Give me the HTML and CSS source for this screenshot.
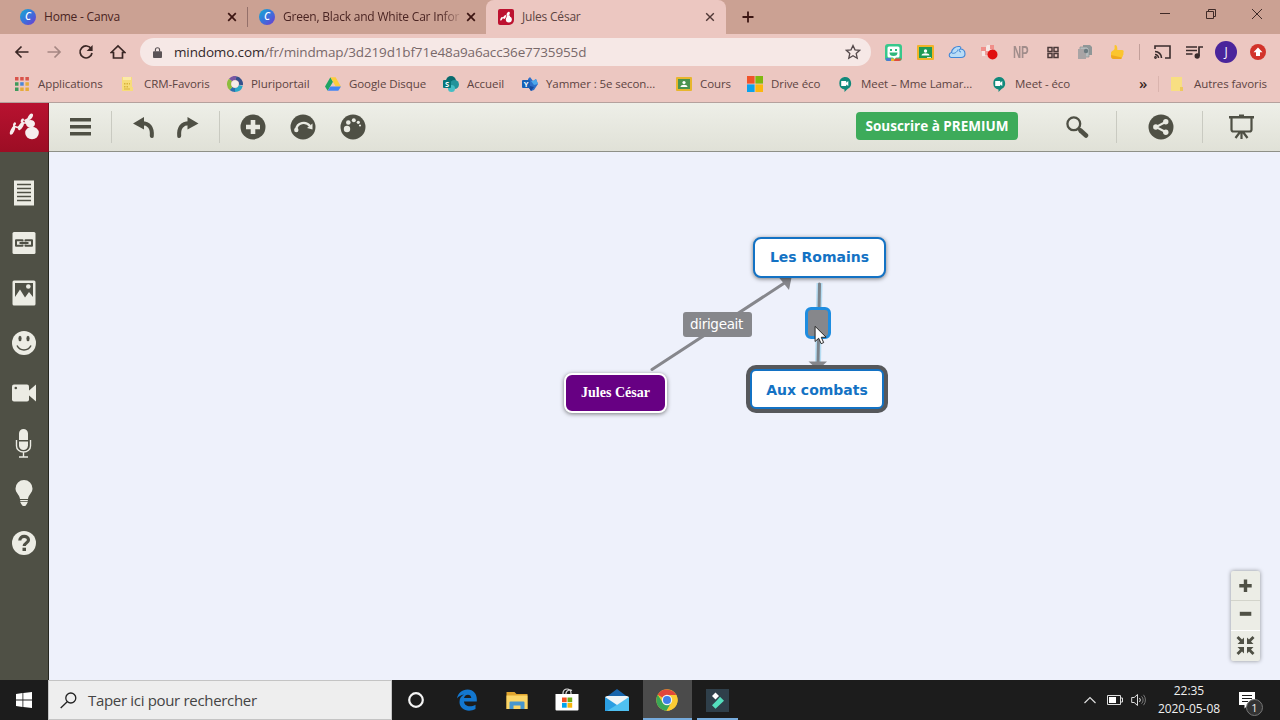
FILE: index.html
```html
<!DOCTYPE html>
<html lang="fr">
<head>
    <meta charset="UTF-8">
    <meta name="viewport" content="width=device-width, initial-scale=1.0">
    <title>Jules César</title>
    <link rel="stylesheet" href="styles.css">
</head>
<body>
    <!-- browser tabs -->
    <div class="tabs">
        <div class="tab">
            <span class="canva">C</span>
            <span class="tab-title">Home - Canva</span>
            <svg class="close" viewBox="0 0 10 10"><path d="M1.2 1.2l7.6 7.6M8.8 1.2L1.2 8.8"/></svg>
        </div>
        <div class="tab tab-second">
            <span class="canva">C</span>
            <span class="tab-title fade">Green, Black and White Car Infor</span>
            <svg class="close" viewBox="0 0 10 10"><path d="M1.2 1.2l7.6 7.6M8.8 1.2L1.2 8.8"/></svg>
        </div>
        <div class="tab active">
            <svg class="favicon" viewBox="0 0 16 16"><path fill="#bd1230" d="M2 0h12a2 2 0 0 1 2 2v9a5 5 0 0 1-5 5H2a2 2 0 0 1-2-2V2a2 2 0 0 1 2-2z"/><g fill="#fff"><circle cx="10.800" cy="10.500" r="3"/><ellipse cx="10.200" cy="4.800" rx="1.400" ry="2.200" transform="rotate(25 10.200 4.800)"/><path d="M8.500 6.500h3.500v3h-3z"/><ellipse cx="6.700" cy="8" rx="1" ry="2.200" transform="rotate(25 6.700 8)"/><ellipse cx="3.400" cy="9.800" rx=".9" ry="2" transform="rotate(25 3.400 9.800)"/><path d="M3.500 8.800l4-1.800v1.200l-3.700 1.600z"/></g></svg>
            <span class="tab-title">Jules César</span>
            <svg class="close" viewBox="0 0 10 10"><path d="M1.2 1.2l7.6 7.6M8.8 1.2L1.2 8.8"/></svg>
        </div>
        <svg class="new-tab" viewBox="0 0 12 12"><path d="M6 .5v11M.5 6h11"/></svg>
        <div class="window-buttons">
            <svg viewBox="0 0 12 12"><path d="M1 5.500h10"/></svg>
            <svg viewBox="0 0 12 12"><path d="M1.5 3.5h7v7h-7zM3.5 3.5v-2h7v7h-2"/></svg>
            <svg viewBox="0 0 12 12"><path d="M1 1l10 10M11 1L1 11"/></svg>
        </div>
    </div>

    <!-- address bar -->
    <div class="navbar">
        <div class="cell"><svg class="nav-icon" viewBox="0 0 16 16"><path d="M14.500 8H2M7.500 2.500L2 8l5.500 5.500"/></svg></div>
        <div class="cell"><svg class="nav-icon disabled" viewBox="0 0 16 16"><path d="M1.500 8H14M8.500 2.500L14 8l-5.500 5.500"/></svg></div>
        <div class="cell"><svg class="nav-icon" viewBox="0 0 16 16"><path d="M13.3 5A6 6 0 1 0 14 9"/><path class="solid" d="M14.6 1v6H8.6z"/></svg></div>
        <div class="cell"><svg class="nav-icon" viewBox="0 0 16 16"><path d="M1.2 8.5L8 2l6.800 6.500H12.500V14h-9V8.500z"/></svg></div>
        <div class="omnibox">
            <svg class="lock" viewBox="0 0 10 12"><path d="M1 4.500h8a1 1 0 0 1 1 1V11a1 1 0 0 1-1 1H1a1 1 0 0 1-1-1V5.500a1 1 0 0 1 1-1z" fill="#5b5356"/><path d="M2.700 5V3a2.300 2.300 0 0 1 4.600 0v2" fill="none" stroke="#5b5356" stroke-width="1.300"/></svg>
            <span class="url"><b>mindomo.com</b>/fr/mindmap/3d219d1bf71e48a9a6acc36e7735955d</span>
            <svg class="star" viewBox="0 0 16 16"><path d="M8 1.500l2 4.300 4.700.5-3.500 3.200 1 4.700L8 11.800l-4.200 2.400 1-4.700L1.300 6.300 6 5.800z"/></svg>
        </div>
        <div class="extensions">
            <div class="cell"><svg width="17" height="17" viewBox="0 0 17 17"><rect width="17" height="17" rx="3" fill="#37c88c"/><path d="M1 14h5v3H3a2 2 0 0 1-2-3z" fill="#4b7bd0"/><path d="M6 14.500h5l-2 2.500H6z" fill="#efb42c"/><path d="M10 14.500h6.500a3 3 0 0 1-2.500 2.500H9z" fill="#e24a3b"/><path d="M4 2.500h9a1.500 1.500 0 0 1 1.500 1.500v8a1.500 1.500 0 0 1-1.500 1.500h-2l-1.500 1.500-1.500-1.500H4A1.500 1.500 0 0 1 2.500 12V4A1.500 1.500 0 0 1 4 2.500z" fill="#fff"/><path d="M5 5h2v2H5zM10 5h2v2h-2zM4.500 8.500h8a4 3.500 0 0 1-8 0z" fill="#2fb67c"/></svg></div>
            <div class="cell"><svg width="17" height="15" viewBox="0 0 17 15"><rect width="17" height="15" rx="1" fill="#f0b429"/><rect x="2" y="2" width="13" height="11" fill="#1f9a55"/><circle cx="8.500" cy="6" r="1.700" fill="#fff"/><path d="M4.500 10.500c0-3 8-3 8 0z" fill="#fff"/><path d="M10 12h4v1h-4z" fill="#d8e8dc"/></svg></div>
            <div class="cell"><svg width="18" height="14" viewBox="0 0 18 14"><path d="M3 12.500C.5 12 .5 8 3.500 7.500 4 4 7 1 11.500 1.500c2 .5 1.500 2 .5 2.500 3 0 5 2 5 5s-2 3.500-4 3.500z" fill="#b9dcf6" stroke="#3f86d6" stroke-width="1.100"/><path d="M4 8c2 1 5-.5 6-3.500M12 4c-1.500 1-1 3 1 3" fill="none" stroke="#3f86d6"/></svg></div>
            <div class="cell"><svg width="18" height="16" viewBox="0 0 18 16"><path d="M2 3h4l1-2h5v7H7l-2 4H2z" fill="#f6e7e4"/><path d="M1 3h5v4H1zM10 1h4v4h-4z" fill="#f08f8a"/><path d="M5 7h4v4H5z" fill="#ee9d98"/><circle cx="12.500" cy="10.500" r="5" fill="#e0100f"/></svg></div>
            <div class="cell"><span class="np">NP</span></div>
            <div class="cell"><svg width="12" height="13" viewBox="0 0 12 13" fill="none" stroke="#4b3a3a" stroke-width="1.500"><path d="M1 1.500h4v4H1zM7 1.500h4v4H7zM1 7.500h4v4H1zM7 7.500h4v4H7z"/></svg></div>
            <div class="cell"><svg width="16" height="16" viewBox="0 0 16 16"><path d="M6 1h7l2 2v8H6z" fill="#8f9798"/><path d="M3 3h7l2 2v8H3z" fill="#b5bcbd" stroke="#8b8f91" stroke-width=".7"/><path d="M1 5h6l2 2v8H1z" fill="#a8a4a5"/><circle cx="9" cy="7" r="2.200" fill="#6c7b80"/></svg></div>
            <div class="cell"><svg width="14" height="16" viewBox="0 0 14 16"><path d="M5 1c2 0 2.500 2 2.300 5H12c2 0 2 2 1.300 3 .5 1 0 2-.5 2.500 0 1-.3 1.500-1 2 0 1-.8 1.500-1.800 1.500H4c-2 0-3-1-3-3V9c0-2 3-2.500 3.500-4C5 3 4 1.500 5 1z" fill="#fbc52e"/><path d="M1 11c0 3 1 4 3 4h6c1 0 1.800-.5 1.800-1.500z" fill="#f0a71f"/></svg></div>
        </div>
        <span class="bar-sep"></span>
        <div class="cell"><svg width="17" height="14" viewBox="0 0 17 14" fill="none" stroke="#3a2c2c" stroke-width="1.600"><path d="M1 4V1h15v12h-5M1 6.500A6.500 6.500 0 0 1 7.500 13M1 9.500A3.500 3.500 0 0 1 4.500 13"/><circle cx="1.500" cy="12.500" r=".6"/></svg></div>
        <div class="cell"><svg width="17" height="14" viewBox="0 0 17 14" fill="none" stroke="#3a2c2c" stroke-width="1.700"><path d="M0 2h11M0 5.500h11M0 9h6.500M13 11V2h4"/><circle cx="11.200" cy="11" r="1.800" fill="#3a2c2c"/></svg></div>
        <div class="cell"><span class="avatar">J</span></div>
        <div class="cell"><svg width="16" height="16" viewBox="0 0 16 16"><circle cx="8" cy="8" r="8" fill="#d2332a"/><path d="M8 3.500l4.500 4.700H10V12H6V8.200H3.500z" fill="#fff"/></svg></div>
    </div>

    <!-- bookmarks -->
    <div class="bookmarks">
        <div class="bookmark"><svg viewBox="0 0 16 16"><path fill="#d9534a" d="M1 1h3.500v3.500H1zM6.200 1h3.500v3.500H6.200zM11.400 1h3.500v3.500h-3.500z"/><path fill="#3f9a5c" d="M1 6.200h3.500v3.500H1zM1 11.400h3.500v3.500H1z"/><path fill="#4b87d9" d="M6.200 6.200h3.500v3.500H6.200z"/><path fill="#e6ab3a" d="M11.400 6.200h3.500v3.500h-3.500zM6.200 11.400h3.500v3.500H6.200zM11.400 11.400h3.500v3.500H11.400z"/></svg><span>Applications</span></div>
        <div class="bookmark"><svg viewBox="0 0 16 16"><path fill="#f7dc7a" d="M2 1h10v10h1v4H2z"/><path fill="#fbeaa6" d="M3 1h8v3H3z"/><path fill="#d9b23c" d="M4 7h1.500v1.500H4zM6.500 7H8v1.500H6.500zM9 7h1v1.500H9zM4 10h1.500v1.500H4zM6.500 10H8v1.500H6.500zM4 12.500h6v1H4z"/></svg><span>CRM-Favoris</span></div>
        <div class="bookmark"><svg viewBox="0 0 16 16" fill="none" stroke-width="4"><path stroke="#7a57a3" d="M3.500 4A6 6 0 0 1 9 2"/><path stroke="#35508c" d="M9 2.100A6 6 0 0 1 13.900 9"/><path stroke="#29a9c7" d="M13.800 9.500A6 6 0 0 1 8 14"/><path stroke="#2c6fad" d="M8 14a6 6 0 0 1-4-1.500"/><path stroke="#8dbd3d" d="M4 12.500A6 6 0 0 1 3.500 4"/><circle cx="8" cy="8" r="3.500" fill="#f4ece9" stroke="none"/></svg><span>Pluriportail</span></div>
        <div class="bookmark"><svg viewBox="0 0 16 16"><path fill="#1fa463" d="M5.400 1.200L0 10.600l2.700 4.200L8 5.700z"/><path fill="#fccd3c" d="M5.400 1.200h5.200l5.400 9.400h-5.300z"/><path fill="#4285f4" d="M2.700 14.800l2.700-4.200H16l-2.700 4.200z"/></svg><span>Google Disque</span></div>
        <div class="bookmark"><svg viewBox="0 0 16 16"><circle cx="8" cy="5" r="5" fill="#086a6d"/><circle cx="11.500" cy="8.500" r="4.500" fill="#22939a"/><circle cx="8.500" cy="12.500" r="3.500" fill="#44bec5"/><rect y="4" width="8" height="8" rx="1" fill="#067578"/><text x="2" y="10.700" font-size="7.500" font-weight="bold" fill="#fff">S</text></svg><span>Accueil</span></div>
        <div class="bookmark"><svg viewBox="0 0 16 16"><path fill="#2d6fc9" d="M6 3l2-2 3 4 3-2 2 5-4 6-3 1-3-5z"/><path fill="#4da7ea" d="M9 5l2 0 3-2 2 5-4 1z"/><path fill="#174a9e" d="M8 10l4 1-3 4-2-3z"/><rect y="4" width="8" height="8" rx="1" fill="#155fb5"/><text x="1.700" y="10.700" font-size="7.500" font-weight="bold" fill="#fff">Y</text></svg><span>Yammer : 5e secon...</span></div>
        <div class="bookmark"><svg viewBox="0 0 16 16"><rect y="1" width="16" height="14" rx="1" fill="#e7b62d"/><rect x="2" y="3" width="12" height="10" fill="#4a934e"/><circle cx="8" cy="6.500" r="1.600" fill="#fff"/><path d="M4.500 11c0-3 7-3 7 0z" fill="#fff"/></svg><span>Cours</span></div>
        <div class="bookmark"><svg viewBox="0 0 16 16"><path fill="#f0532a" d="M0 0h7.600v7.600H0z"/><path fill="#7fb80f" d="M8.400 0H16v7.600H8.400z"/><path fill="#0ba2ec" d="M0 8.400h7.600V16H0z"/><path fill="#fbb70e" d="M8.400 8.400H16V16H8.400z"/></svg><span>Drive éco</span></div>
        <div class="bookmark"><svg viewBox="0 0 16 16"><path fill="#11897b" d="M7.500 1a6.300 6.300 0 0 1 3 12L7.500 16v-2.600A6.300 6.300 0 0 1 7.500 1z"/><path fill="#fff" d="M4.200 5h5v1.700L11.300 5v5L9.200 8.500V10h-5z"/></svg><span>Meet – Mme Lamar...</span></div>
        <div class="bookmark"><svg viewBox="0 0 16 16"><path fill="#11897b" d="M7.500 1a6.300 6.300 0 0 1 3 12L7.500 16v-2.600A6.300 6.300 0 0 1 7.500 1z"/><path fill="#fff" d="M4.200 5h5v1.700L11.300 5v5L9.200 8.500V10h-5z"/></svg><span>Meet - éco</span></div>
        <div class="more">»</div>
        <div class="bookmark others"><svg viewBox="0 0 16 16"><path fill="#f8df82" d="M1 1h11v10h1v4H1z"/><path fill="#eec95c" d="M10 11h3v4h-3z"/></svg><span>Autres favoris</span></div>
    </div>

    <!-- mindmap editor -->
    <div class="toolbar">
        <div class="logo">
            <svg width="32" height="28" viewBox="0 0 32 28" fill="#f6eeee"><ellipse cx="24" cy="20" rx="6.800" ry="6.200"/><ellipse cx="22.500" cy="10.800" rx="4.500" ry="3.800"/><ellipse cx="22.300" cy="3.800" rx="2" ry="3.600" transform="rotate(35 22.300 3.800)"/><path d="M20 5l-4 2 2 4 4-2z"/><ellipse cx="13" cy="13" rx="2" ry="4.600" transform="rotate(30 13 13)"/><ellipse cx="14.300" cy="7.500" rx="1.400" ry="2.200" transform="rotate(30 14.300 7.500)"/><ellipse cx="4.500" cy="17.500" rx="1.900" ry="4.600" transform="rotate(25 4.500 17.500)"/><ellipse cx="6.500" cy="11.200" rx="1.300" ry="2" transform="rotate(30 6.500 11.200)"/><path d="M5 13l5 1.500 3-3M14 10l5 0" fill="none" stroke="#f6eeee" stroke-width="1.600"/></svg>
        </div>
        <div class="tool menu"><svg width="21" height="20" viewBox="0 0 21 20"><path d="M0 1h21v3.500H0zM0 8h21v3.500H0zM0 15h21v3.500H0z"/></svg></div>
        <span class="sep"></span>
        <div class="history">
            <div class="tool"><svg width="24" height="24" viewBox="0 0 24 24"><path d="M1 7.500L12 1v12.500z"/><path class="line" d="M10 7.300c7 0 10.500 4 9.800 12.700"/></svg></div>
            <div class="tool"><svg width="24" height="24" viewBox="0 0 24 24"><path d="M23.500 7.500L12.500 1v12.500z"/><path class="line" d="M14 7.300C7 7.300 3.500 11.300 4.200 20"/></svg></div>
        </div>
        <span class="sep"></span>
        <div class="topics">
            <div class="tool"><svg width="26" height="26" viewBox="0 0 26 26"><circle cx="13" cy="13" r="12.500"/><path class="cut" d="M10.700 6h4.600v4.700H20v4.600h-4.700V20h-4.600v-4.700H6v-4.600h4.700z"/></svg></div>
            <div class="tool"><svg width="26" height="26" viewBox="0 0 26 26"><circle cx="13" cy="13" r="12.500"/><path d="M6 16c1-8 10-9 14-4" fill="none" stroke="#e9eae2" stroke-width="2.300"/><circle class="cut" cx="6.300" cy="16" r="2.200"/><path class="cut" d="M22.500 9.500v6l-5.500-1.500z"/></svg></div>
            <div class="tool"><svg width="26" height="26" viewBox="0 0 26 26"><circle cx="13" cy="13" r="12.500"/><circle class="cut" cx="7" cy="15" r="3.200"/><circle class="cut" cx="8.300" cy="8.500" r="2.300"/><circle class="cut" cx="13.800" cy="6.300" r="2"/><circle class="cut" cx="18.300" cy="8.300" r="1.600"/><circle class="cut" cx="20" cy="11.500" r="1.100"/></svg></div>
        </div>
        <button class="premium">Souscrire à PREMIUM</button>
        <div class="tool search"><svg width="24" height="24" viewBox="0 0 24 24"><circle cx="8.800" cy="8.800" r="6.400" fill="none" stroke="#4f5045" stroke-width="2.300"/><path d="M13 13l3 3" stroke="#4f5045" stroke-width="3"/><path d="M15.500 15.500l5.500 5" stroke="#4f5045" stroke-width="4.500" stroke-linecap="round"/></svg></div>
        <span class="sep"></span>
        <div class="tool share"><svg width="26" height="26" viewBox="0 0 26 26"><circle cx="13" cy="13" r="12.500"/><path d="M17.500 8L8 13l9.500 5" fill="none" stroke="#e9eae2" stroke-width="2"/><circle class="cut" cx="17.800" cy="7.700" r="2.700"/><circle class="cut" cx="7.800" cy="13" r="2.700"/><circle class="cut" cx="17.800" cy="18.300" r="2.700"/></svg></div>
        <span class="sep"></span>
        <div class="tool present"><svg width="26" height="26" viewBox="0 0 26 26"><path d="M0 2h10V.5h5V2h10v2.500H0z"/><path d="M2.500 4v11.500a2 2 0 0 0 2 2h16a2 2 0 0 0 2-2V4M12.500 18v7M11 18l-4.500 6M14 18l4.500 6" fill="none" stroke="#4f5045" stroke-width="2.200"/></svg></div>
    </div>

    <div class="editor">
        <div class="sidebar">
            <svg viewBox="0 0 26 26"><path d="M3.500.5h20v25h-20z"/><path class="dark" d="M6.500 4.500h14M6.500 8.500h14M6.500 12.500h14M6.500 16.500h14M6.500 20.500h14"/></svg>
            <svg viewBox="0 0 26 26"><rect x="2" y="2" width="23" height="22" rx="1.500"/><path class="chain" d="M12 11.500V10.200H5.500v5.600H12v-1.300M15 11.500v-1.300h6.500v5.600H15v-1.300M9 13h9"/></svg>
            <svg viewBox="0 0 26 26"><rect x="2" y=".5" width="23" height="25" rx="1.500"/><path fill="#4f5045" d="M4.500 3h18v14l-4-5-4 5.500-5-8L4.500 17z"/><circle cx="17.800" cy="6.500" r="2.300"/></svg>
            <svg viewBox="0 0 26 26"><circle cx="13.500" cy="13" r="12"/><ellipse cx="9.500" cy="8.500" rx="1.600" ry="2.800" fill="#4f5045"/><ellipse cx="17.500" cy="8.500" rx="1.600" ry="2.800" fill="#4f5045"/><path class="dark" d="M6.500 15.500c3 6 11 6 14 0"/></svg>
            <svg viewBox="0 0 26 26"><rect x="1.500" y="4.500" width="17" height="17" rx="2"/><path d="M18 11l7.500-6.500v17L18 15z"/><circle cx="5.300" cy="8" r="1.300" fill="#4f5045"/></svg>
            <svg class="tall" viewBox="0 0 26 30"><path d="M8.500 12V5.500a4.500 4.500 0 0 1 9 0V12z"/><path d="M8.500 13.500v4a4.500 4.500 0 0 0 9 0v-4z"/><path d="M6 12v6c0 3.500 3 6 7 6s7-2.500 7-6v-6M13 24v5M8.500 29h9" fill="none" stroke="#ecece4" stroke-width="1.400"/></svg>
            <svg viewBox="0 0 26 26"><path d="M13.500 0a8.500 8.500 0 0 1 8.500 8.500c0 4.500-4 6-4.500 10.500h-8C9 14.500 5 13 5 8.500A8.500 8.500 0 0 1 13.500 0z"/><path d="M9.700 20h7.600v1.200H9.700zM9.700 22h7.600l-1 2-1.500 2h-2.500l-1.600-2z"/></svg>
            <svg viewBox="0 0 26 26"><circle cx="13.500" cy="13" r="12"/><path d="M9.300 10.500c0-5.500 8.700-5.300 8.700-.5 0 3-4.300 3-4.300 6" fill="none" stroke="#4f5045" stroke-width="3.200"/><path fill="#4f5045" d="M12 17.700h3.500V21H12z"/></svg>
        </div>
        <div class="canvas">
            <svg class="links" width="1231" height="528" viewBox="49 152 1231 528">
                <path d="M652 369.500L786 282" stroke="#86878c" stroke-width="3" stroke-linecap="round"/>
                <path d="M779 277.500h12.500L789 290z" fill="#86878c"/>
                <path d="M819.500 283L818 364" stroke="#b5dcf2" stroke-width="6"/>
                <path d="M819.500 284L818 364" stroke="#7c838a" stroke-width="3" stroke-linecap="round"/>
                <path d="M808.500 361.500h18.500L818 370z" fill="#86878c"/>
            </svg>
            <div class="node romains">Les Romains</div>
            <div class="node combats">Aux combats</div>
            <div class="node cesar">Jules César</div>
            <div class="link-label">dirigeait</div>
            <div class="link-label editing"></div>
            <svg class="cursor" viewBox="0 0 12 18"><path d="M1 1v14l3.300-3 2.300 5 2.300-1-2.200-4.900h4.500z" fill="#fff" stroke="#222" stroke-width=".9"/></svg>
            <div class="zoom-box">
                <svg viewBox="0.500 0 29 29"><path d="M13.300 8.500h3.400V13h4.500v3.400h-4.500V21h-3.400v-4.600H8.800V13h4.500z"/></svg>
                <svg viewBox="0.500 0 29 29"><path d="M9.300 10.800h11.500v4H9.300z"/></svg>
                <svg viewBox="0.500 0 29 30"><g id="arrow"><path d="M13.500 13V6.500l-2 2L8 5 6 7l3.500 3.500L7 13z"/></g><use href="#arrow" transform="matrix(-1 0 0 1 30 0)"/><use href="#arrow" transform="matrix(1 0 0 -1 0 29)"/><use href="#arrow" transform="rotate(180 15 14.500)"/></svg>
            </div>
        </div>
    </div>

    <!-- Windows taskbar -->
    <div class="taskbar">
        <div class="start"><svg width="16" height="16" viewBox="0 0 16 16" fill="#fff"><path d="M0 2l6.500-.9v6.500H0zM7.300 1L16 0v7.600H7.300zM0 8.400h6.500v6.500L0 14zM7.300 8.400H16V16l-8.700-1z"/></svg></div>
        <div class="search-box">
            <svg width="17" height="17" viewBox="0 0 17 17" fill="none" stroke="#222" stroke-width="1.300"><circle cx="10.800" cy="6" r="5"/><path d="M7.200 9.700L.7 16"/></svg>
            <span>Taper ici pour rechercher</span>
        </div>
        <div class="apps">
            <div class="app cortana"><svg width="18" height="18" viewBox="0 0 18 18"><circle cx="9" cy="9" r="6.800" fill="none" stroke="#f4f4f4" stroke-width="2.200"/></svg></div>
            <div class="app"><svg width="20" height="22" viewBox="0 0 20 22"><path d="M0 9.500C1 4 5 .5 10.500.5c6 0 9.300 4.500 9.300 9.500v2.500H7c.3 5 6.500 6 11.500 3.200v4.300C11 24 2.500 20.500 2.500 13c0-4 2-6 4.500-7.500C4 6 1.500 7.500 0 9.500zM7 9h7.300c0-4.500-6.500-4.500-7.300 0z" fill="#1377cf"/></svg></div>
            <div class="app"><svg width="22" height="19" viewBox="0 0 22 19"><path d="M.5 1h8l2 2h11v15H.5z" fill="#e0a52f"/><path d="M.5 4.500h21V18H.5z" fill="#fbd668"/><path d="M3.500 18v-6.500a1 1 0 0 1 1-1h13a1 1 0 0 1 1 1V18h-4v-3.500h-7V18z" fill="#4696cf"/></svg></div>
            <div class="app"><svg width="24" height="24" viewBox="0 0 24 24"><path d="M8 8V5a4 4 0 0 1 8 0v3M11 8V5a4 4 0 0 1 6-2.500" fill="none" stroke="#ddd" stroke-width="1.200"/><path d="M.5 6h23v15.500a1 1 0 0 1-1 1h-21a1 1 0 0 1-1-1z" fill="#fff"/><path fill="#f25022" d="M7 9.500h4.700v4.700H7z"/><path fill="#6fab16" d="M12.500 9.500h4.700v4.700h-4.700z"/><path fill="#00a4ef" d="M7 15h4.700v4.700H7z"/><path fill="#f7b50c" d="M12.500 15h4.700v4.700h-4.700z"/></svg></div>
            <div class="app"><svg width="26" height="24" viewBox="0 0 26 24"><path d="M1 10L13 1l12 9z" fill="#1765ac"/><path d="M1 9h24v14H1z" fill="#2b9ee2"/><path d="M25 9v14H3z" fill="#4fc0f1"/><path d="M3 8h20l2 1-12 8L1 9z" fill="#eff4f7"/></svg></div>
            <div class="app running focused"><svg width="22" height="22" viewBox="0 0 22 22"><circle cx="11" cy="11" r="10.700" fill="#f7c52b"/><path d="M11 11L1.700 5.700A10.700 10.700 0 0 1 20.300 6H11z" fill="#e2473a"/><path d="M1.700 5.700A10.700 10.700 0 0 0 10.500 21.700L15.500 13.500 11 11 6.700 13.500z" fill="#3aa757"/><path d="M20.300 6A10.700 10.700 0 0 1 10.500 21.700L15.500 13.500 15 6z" fill="#fbcb34"/><circle cx="11" cy="11" r="5.200" fill="#f4f4f4"/><circle cx="11" cy="11" r="4" fill="#3f7fe6"/></svg></div>
            <div class="app running filmora"><svg width="23" height="23" viewBox="0 0 23 23"><path fill="#2f3f4a" d="M0 0h23v23H0z"/><path fill="#fff" d="M9.500 3.500l3.500 3.500-3.500 3.500L6 7z"/><path fill="#54debd" d="M14 7.800l4 4-8.500 8-3.500-3.500 4.500-4.500z"/></svg></div>
        </div>
        <div class="tray">
            <svg width="12" height="8" viewBox="0 0 12 8"><path d="M.5 7L6 1.500 11.500 7" fill="none" stroke="#ddd" stroke-width="1.200"/></svg>
            <svg class="battery" width="16" height="10" viewBox="0 0 16 10"><path d="M.5 .5h13v9H.5zM13.500 3h2v4h-2" fill="none" stroke="#ddd"/><path d="M2 2h7v6H2z" fill="#fff"/></svg>
            <svg class="volume" width="16" height="14" viewBox="0 0 16 14" fill="none" stroke="#ddd"><path d="M.7 4.500h2.500L6.500 1.500v11L3.200 9.500H.7zM8.500 5a3 3 0 0 1 0 4"/><path d="M10.500 3.300a5 5 0 0 1 0 7.400M12.500 1.800a8 8 0 0 1 0 10.400" stroke="#777"/></svg>
            <div class="clock"><span>22:35</span><span>2020-05-08</span></div>
            <div class="notifications">
                <svg width="16" height="17" viewBox="0 0 16 17"><path d="M0 0h16v13H9l-3.500 3.500V13H0z" fill="#fff"/><path d="M3 3.500h10M3 6.500h10M3 9.500h6" stroke="#1c1c1c"/></svg>
                <span class="badge">1</span>
            </div>
        </div>
    </div>
</body>
</html>
```
FILE: styles.css
```css
* {
    box-sizing: border-box;
}

body {
    margin: 0;
    width: 1280px;
    height: 720px;
    overflow: hidden;
    font-family: "Open Sans", "Noto Sans", sans-serif;
    font-size: 12px;
    color: #5c4442;
}

svg {
    display: block;
    flex: none;
}

/* tabs */
.tabs {
    display: flex;
    height: 34px;
    background: #cba193;
}

.tab {
    display: flex;
    align-items: center;
    width: 247px;
    padding-left: 20px;
    color: #4a2422;
}

.tab-second {
    width: 239px;
    padding-left: 12px;
    position: relative;
}

.tab-second:before {
    content: "";
    position: absolute;
    left: 0;
    top: 7px;
    width: 1px;
    height: 20px;
    background: #94706a;
}

.tab.active {
    width: 240px;
    padding-left: 12px;
    background: #ecc7c1;
    border-radius: 8px 8px 0 0;
    color: #5c4442;
}

.tab-title {
    flex: none;
    width: 183px;
    margin-left: 8px;
    padding-bottom: 2px;
    white-space: nowrap;
    letter-spacing: -0.2px;
}

.fade {
    -webkit-mask-image: linear-gradient(to right, #000 158px, transparent 180px);
    mask-image: linear-gradient(to right, #000 158px, transparent 180px);
}

.canva {
    flex: none;
    width: 16px;
    height: 16px;
    border-radius: 50%;
    background: linear-gradient(135deg, #12aed0, #3a72dc 50%, #7038cf);
    color: #fff;
    font-size: 10px;
    font-style: italic;
    font-weight: 600;
    line-height: 15px;
    text-align: center;
}

.favicon {
    width: 16px;
    height: 16px;
}

.close {
    width: 10px;
    height: 10px;
    fill: none;
    stroke: #3b1512;
    stroke-width: 1.7;
}

.active .close {
    stroke: #4f3836;
    stroke-width: 1.4;
}

.new-tab {
    width: 12px;
    height: 12px;
    margin: 11px 0 0 16px;
    stroke: #3b1512;
    stroke-width: 1.8;
}

.window-buttons {
    display: flex;
    gap: 34px;
    margin: 8px 17px 0 auto;
}

.window-buttons svg {
    width: 12px;
    height: 12px;
    fill: none;
    stroke: #3f2a27;
}

/* address bar */
.navbar {
    display: flex;
    align-items: center;
    height: 36px;
    padding-left: 6px;
    background: #ecc7c1;
}

.cell {
    display: flex;
    flex: none;
    align-items: center;
    justify-content: center;
    width: 32px;
}

.nav-icon {
    width: 16px;
    height: 16px;
    fill: none;
    stroke: #3a2725;
    stroke-width: 1.7;
}

.nav-icon.disabled {
    stroke: #a58783;
}

.nav-icon .solid {
    fill: #3a2725;
    stroke: none;
}

.omnibox {
    display: flex;
    align-items: center;
    width: 731px;
    height: 28px;
    margin: 0 6px;
    padding: 0 10px 0 13px;
    border-radius: 14px;
    background: #f6e8e6;
}

.lock {
    width: 9px;
    height: 11px;
}

.url {
    margin-left: 12px;
    font-size: 13.5px;
    color: #79696a;
    letter-spacing: -0.14px;
}

.url b {
    font-weight: normal;
    color: #33282a;
}

.star {
    width: 16px;
    height: 16px;
    margin-left: auto;
    fill: none;
    stroke: #54484a;
    stroke-width: 1.3;
}

.extensions {
    display: flex;
}

.np {
    font: bold 17px/17px "Liberation Sans", sans-serif;
    color: #a18d8b;
    transform: scaleX(0.67);
}

.bar-sep {
    width: 1px;
    height: 16px;
    margin: 0 6px;
    background: #c29f9a;
}

.avatar {
    width: 22px;
    height: 22px;
    border-radius: 50%;
    background: #4a259b;
    color: #fff;
    line-height: 22px;
    text-align: center;
}

/* bookmarks */
.bookmarks {
    display: grid;
    grid-template-columns: 106px 107px 98px 118px 79px 154px 71px 90px 154px 148px 19px 118px;
    align-items: center;
    height: 33px;
    padding: 0 4px 5px 14px;
    background: #ecc7c1;
    border-bottom: 1px solid #b5a19d;
}

.bookmark {
    display: flex;
    align-items: center;
    gap: 8px;
    white-space: nowrap;
    font-size: 11.5px;
    letter-spacing: -0.08px;
}

.bookmark svg {
    width: 16px;
    height: 16px;
}

.bookmark span {
    margin-top: -1px;
}

.more {
    font-size: 15px;
    font-weight: 600;
    line-height: 16px;
    margin-top: -2px;
    color: #3b2725;
}

.others:before {
    content: "";
    width: 1px;
    height: 16px;
    margin-right: 3px;
    background: #dab4ae;
}

/* editor toolbar */
.toolbar {
    display: flex;
    align-items: center;
    height: 49px;
    background: linear-gradient(#eeefe8, #e0e1d7);
    border-bottom: 1px solid #8e9087;
}

.logo {
    display: flex;
    align-items: center;
    justify-content: center;
    width: 49px;
    height: 49px;
    background: linear-gradient(#b81230, #9c0d24);
    border-right: 1px solid #7b1020;
}

.tool {
    display: flex;
    justify-content: center;
    width: 50px;
    fill: #4f5045;
}

.tool .line {
    fill: none;
    stroke: #4f5045;
    stroke-width: 4;
    stroke-linecap: round;
}

.tool .cut {
    fill: #e9eae2;
}

.menu {
    width: 62px;
    padding-left: 1px;
}

.sep {
    width: 1px;
    height: 32px;
    background: #c9cac1;
}

.history {
    display: flex;
    margin: 0 11px 0 10px;
    padding-top: 2px;
}

.history .tool {
    width: 43px;
}

.topics {
    display: flex;
    margin-left: 8px;
}

.premium {
    width: 162px;
    height: 28px;
    margin: 0 20px 2px auto;
    padding: 0;
    border: none;
    border-radius: 4px;
    background: #3dab5a;
    color: #fff;
    font: bold 13.5px "Open Sans", sans-serif;
    white-space: nowrap;
}

.search {
    width: 78px;
}

.share {
    width: 85px;
    padding-left: 3px;
}

.present {
    width: 77px;
    padding-left: 1px;
}

/* sidebar and canvas */
.editor {
    display: flex;
    height: 528px;
}

.sidebar {
    display: flex;
    flex-direction: column;
    width: 49px;
    padding: 16px 0 0 10px;
    background: #4f5045;
    border-right: 1px solid #26271f;
}

.sidebar svg {
    width: 27px;
    height: 26px;
    margin: 12px 0;
    fill: #ecece4;
}

.sidebar .tall {
    height: 30px;
    margin: 10px 0;
}

.sidebar .dark {
    fill: none;
    stroke: #4f5045;
    stroke-width: 1.5;
}

.sidebar .chain {
    fill: none;
    stroke: #4f5045;
    stroke-width: 2;
    stroke-linejoin: round;
}

.canvas {
    position: relative;
    flex: 1;
    background: #eef1fb;
}

.links {
    position: absolute;
    left: 0;
    top: 0;
}

.node {
    position: absolute;
    display: flex;
    align-items: center;
    justify-content: center;
    border: 2px solid #1372c4;
    border-radius: 8px;
    background: #fff;
    color: #1372c4;
    font: bold 14px "DejaVu Sans", sans-serif;
    white-space: nowrap;
}

.romains {
    left: 704px;
    top: 85px;
    width: 133px;
    height: 41px;
    padding-bottom: 1px;
    box-shadow: 0 1px 4px rgba(0, 0, 0, 0.5);
}

.combats {
    left: 701px;
    top: 217px;
    width: 134px;
    height: 40px;
    padding-top: 1px;
    border-radius: 6px;
    box-shadow: 0 0 0 4px #56585b;
}

.cesar {
    left: 515px;
    top: 221px;
    width: 103px;
    height: 40px;
    border-color: #fff;
    background: #670083;
    color: #fff;
    font: bold 14px "Liberation Serif", serif;
    box-shadow: 0 1px 4px rgba(0, 0, 0, 0.5);
}

.link-label {
    position: absolute;
    left: 634px;
    top: 160px;
    width: 69px;
    height: 25px;
    padding-right: 2px;
    border-radius: 3px;
    background: #86878b;
    color: #fff;
    font: 13.5px/25px "DejaVu Sans", sans-serif;
    letter-spacing: -0.3px;
    text-align: center;
}

.editing {
    left: 756px;
    top: 155px;
    width: 26px;
    height: 32px;
    border: 3px solid #1e8de0;
    border-radius: 6px;
}

.cursor {
    position: absolute;
    left: 765px;
    top: 173px;
    width: 13px;
    height: 20px;
}

.zoom-box {
    position: absolute;
    left: 1182px;
    top: 419px;
    width: 29px;
    height: 90px;
    border-radius: 2px;
    background: #ecede6;
    box-shadow: 0 0 4px rgba(0, 0, 0, 0.4);
}

.zoom-box svg {
    width: 29px;
    fill: #4f5045;
}

.zoom-box svg:nth-child(2) {
    border-top: 1px solid #d3d4cb;
    border-bottom: 1px solid #fff;
}

/* taskbar */
.taskbar {
    display: flex;
    height: 40px;
    background: #1c1c1c;
}

.start {
    display: flex;
    align-items: center;
    justify-content: center;
    width: 48px;
}

.search-box {
    display: flex;
    align-items: center;
    width: 344px;
    padding-left: 11px;
    border: 1px solid #c4c4c4;
    background: #eee;
    color: #444;
    font-size: 15px;
}

.search-box span {
    margin-left: 11px;
    letter-spacing: -0.32px;
}

.apps {
    display: flex;
}

.app {
    display: flex;
    align-items: center;
    justify-content: center;
    width: 50px;
    height: 40px;
}

.cortana {
    padding-right: 2px;
}

.running {
    border-bottom: 2px solid #76abdc;
    padding-top: 2px;
}

.focused {
    width: 49px;
    margin-left: 1px;
    padding-right: 1px;
    background: #4b4b4b;
}

.filmora {
    width: 41px;
    margin-left: 5px;
}

.tray {
    display: flex;
    align-items: center;
    width: 196px;
    margin-left: auto;
    color: #f0f0f0;
}

.battery {
    margin-left: 11px;
}

.volume {
    margin-left: 8px;
}

.clock {
    display: flex;
    flex-direction: column;
    align-items: center;
    width: 68px;
    margin-left: 8px;
    font-size: 12px;
    line-height: 18px;
    white-space: nowrap;
    letter-spacing: -0.05px;
}

.notifications {
    position: relative;
    margin-left: 16px;
}

.badge {
    position: absolute;
    left: 7px;
    top: 7px;
    width: 17px;
    height: 17px;
    border: 1px solid #777;
    border-radius: 50%;
    background: #333;
    font-size: 11px;
    line-height: 15px;
    text-align: center;
}
```
